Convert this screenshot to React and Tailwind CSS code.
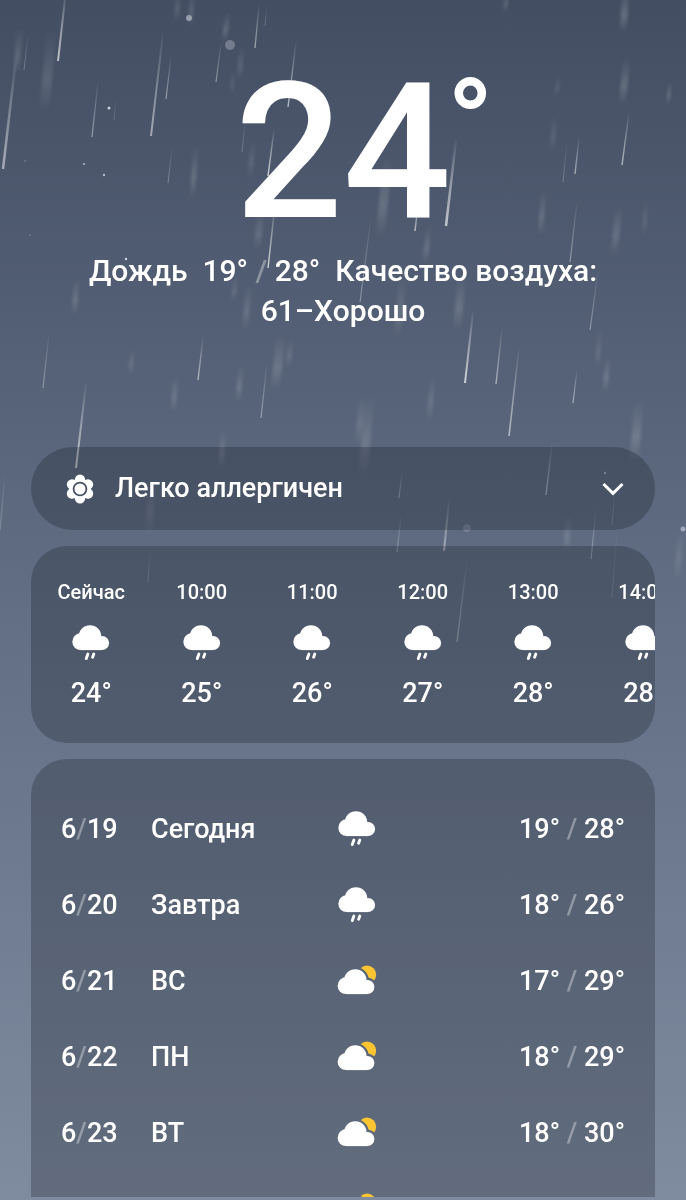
import { useId } from 'react';

const HOURS = [
  { time: 'Сейчас', temp: 24 },
  { time: '10:00', temp: 25 },
  { time: '11:00', temp: 26 },
  { time: '12:00', temp: 27 },
  { time: '13:00', temp: 28 },
  { time: '14:00', temp: 28 },
];

const DAYS = [
  { month: 6, day: 19, label: 'Сегодня', icon: 'rain', low: 19, high: 28 },
  { month: 6, day: 20, label: 'Завтра', icon: 'rain', low: 18, high: 26 },
  { month: 6, day: 21, label: 'ВС', icon: 'sun', low: 17, high: 29 },
  { month: 6, day: 22, label: 'ПН', icon: 'sun', low: 18, high: 29 },
  { month: 6, day: 23, label: 'ВТ', icon: 'sun', low: 18, high: 30 },
  { month: 6, day: 24, label: 'СР', icon: 'sun', low: 18, high: 30 },
];

// [x1, y1, x2, y2, width, opacity]
const DROPS = [
  [66, -10, 58, 61, 2, 0.65], [16, 58, 3, 169, 2.5, 0.5], [28, 34, 24, 70, 1, 0.25],
  [98, 82, 92, 137, 1.2, 0.45], [163, 33, 151, 136, 2, 0.5], [171, 57, 166, 99, 1.2, 0.45],
  [221, 43, 216, 82, 1.2, 0.4], [259, 5, 255, 48, 1.3, 0.5], [267, 5, 265, 26, 1, 0.2],
  [296, 42, 288, 107, 1.4, 0.6], [116, 97, 114, 120, 1, 0.15], [172, 148, 168, 183, 1, 0.3],
  [245, 122, 242, 152, 1, 0.25], [274, 130, 268, 176, 1.5, 0.7], [275, 205, 268, 268, 1.5, 0.7],
  [456, 140, 446, 226, 2.5, 0.65], [418, 205, 415, 231, 1.5, 0.6], [579, 138, 575, 174, 1.4, 0.5],
  [567, 143, 563, 182, 1, 0.25], [629, 113, 622, 165, 1.5, 0.55], [577, 202, 570, 262, 1.2, 0.4],
  [371, 218, 360, 302, 1.2, 0.35], [49, 334, 43, 388, 1.2, 0.35], [203, 338, 198, 380, 1.4, 0.55],
  [86, 384, 76, 468, 2, 0.65], [267, 363, 261, 418, 1.2, 0.4], [473, 312, 465, 383, 2, 0.7],
  [502, 329, 496, 384, 1.4, 0.5], [519, 348, 509, 436, 1.6, 0.55], [577, 370, 573, 403, 1.2, 0.5],
  [598, 272, 590, 330, 1.2, 0.35], [552, 443, 546, 495, 1.4, 0.45], [402, 472, 399, 498, 1.2, 0.35],
  [401, 516, 397, 552, 1.2, 0.3], [449, 500, 444, 551, 2, 0.45], [467, 560, 457, 642, 1.5, 0.35],
  [596, 510, 591, 559, 1.2, 0.35], [617, 530, 612, 598, 1.2, 0.15], [615, 490, 612, 525, 1, 0.2],
  [150, 552, 148, 582, 1, 0.25], [5, 475, 0, 530, 1.5, 0.2],
];

const SOFT_DROPS = [
  [20, 28, 16, 75, 6, 0.14], [52, 30, 44, 112, 10, 0.11], [179, -10, 176, 22, 5, 0.12],
  [193, -10, 190, 27, 5, 0.12], [228, 12, 224, 42, 5, 0.16], [242, 46, 239, 80, 5, 0.12],
  [233, 70, 232, 95, 4, 0.1], [196, 145, 192, 200, 5, 0.16], [253, 140, 250, 178, 5, 0.1],
  [261, 210, 257, 250, 7, 0.12], [388, 155, 380, 238, 9, 0.15], [507, -8, 505, 12, 4, 0.15],
  [626, -10, 623, 32, 7, 0.18], [627, 58, 622, 104, 7, 0.16], [559, 75, 556, 97, 4, 0.1],
  [555, 115, 552, 152, 5, 0.1], [544, 190, 540, 236, 5, 0.15], [619, 205, 614, 255, 7, 0.14],
  [646, 200, 644, 236, 4, 0.1], [670, 82, 668, 104, 3, 0.2], [429, 225, 425, 264, 5, 0.15],
  [403, 276, 397, 338, 7, 0.12], [462, 276, 457, 330, 8, 0.14], [77, 278, 74, 315, 5, 0.15],
  [236, 275, 233, 302, 4, 0.12], [249, 285, 245, 330, 6, 0.13], [281, 335, 275, 390, 9, 0.14],
  [291, 338, 288, 368, 5, 0.12], [133, 348, 130, 375, 4, 0.13], [176, 376, 173, 412, 5, 0.14],
  [241, 365, 238, 402, 5, 0.15], [223, 430, 221, 468, 5, 0.14], [433, 375, 429, 422, 5, 0.12],
  [362, 395, 358, 445, 6, 0.12], [370, 395, 363, 475, 9, 0.13], [600, 330, 597, 368, 4, 0.12],
  [608, 357, 605, 392, 5, 0.16], [639, 402, 634, 462, 9, 0.15], [152, 480, 149, 535, 7, 0.1],
  [569, 515, 566, 552, 6, 0.12], [681, 530, 677, 580, 6, 0.1],
];

// [cx, cy, r, opacity]
const SPLASHES = [
  [189, 18, 3, 0.5], [230, 45, 5, 0.3], [109, 108, 1.5, 0.85], [84, 164, 1, 0.7],
  [104, 175, 1.2, 0.7], [126, 259, 1.2, 0.9], [25, 161, 0.8, 0.4], [30, 235, 0.8, 0.4],
  [683, 529, 2.5, 0.5], [467, 528, 4, 0.2], [605, 473, 1.2, 0.5],
];

const CLOUD_SHAPE = (
  <>
    <circle cx="19" cy="12.5" r="11.3" />
    <circle cx="9.7" cy="17.7" r="8.4" />
    <circle cx="31" cy="19" r="7.1" />
    <rect x="9.7" y="15" width="21.3" height="11.1" />
  </>
);

export default function App() {
  return (
    <div className="relative isolate flex h-screen flex-col overflow-hidden bg-linear-to-b from-[#434e63] via-[#626e84] to-[#7f8b9f] px-[31px] pb-[3px] font-['Roboto','Noto_Sans',sans-serif] font-medium text-white">
      <Rain />

      <header className="flex flex-col items-center pt-[53px] text-center">
        <h1 className="relative text-[190px] leading-[198px]">
          24
          <span className="absolute left-full top-0 -ml-1 text-[120px] font-bold leading-[140px]">°</span>
        </h1>
        <p className="px-12 text-[30px] leading-10">
          Дождь&nbsp; 19° <Slash /> 28°&nbsp; Качество воздуха: 61–Хорошо
        </p>
      </header>

      <main className="mt-[116px] flex min-h-0 flex-1 flex-col gap-4">
        <button
          type="button"
          className="flex h-[83px] shrink-0 items-center rounded-full bg-[#141c28]/28 pl-[34px] pr-[30px] text-left text-[27px]"
        >
          <FlowerIcon />
          <span className="ml-5 flex-1">Легко аллергичен</span>
          <ChevronIcon />
        </button>

        <section className="shrink-0 overflow-hidden rounded-[36px] bg-[#141c28]/28 py-8 pl-[5px]">
          <ul className="grid auto-cols-[17.85%] grid-flow-col">
            {HOURS.map((hour) => (
              <li key={hour.time} className="flex flex-col items-center">
                <span className="text-[20px] leading-7">{hour.time}</span>
                <RainIcon className="mt-[18px]" />
                <span className="mt-[13px] text-[27px] leading-9">{hour.temp}°</span>
              </li>
            ))}
          </ul>
        </section>

        <section className="min-h-0 flex-1 overflow-hidden rounded-t-[36px] bg-[#141c28]/28 px-[30px] pt-8 text-[27px]">
          <ul>
            {DAYS.map((day) => (
              <li key={day.day} className="grid h-[76px] grid-cols-[90px_3fr_40px_4fr] items-center">
                <span>
                  {day.month}
                  <Slash />
                  {day.day}
                </span>
                <span>{day.label}</span>
                {day.icon === 'rain' ? <RainIcon /> : <SunCloudIcon />}
                <span className="text-right">
                  {day.low}° <Slash /> {day.high}°
                </span>
              </li>
            ))}
          </ul>
        </section>
      </main>
    </div>
  );
}

function Slash() {
  return <span className="text-white/35">/</span>;
}

function Rain() {
  return (
    <svg
      className="absolute inset-x-0 top-0 -z-10 w-full"
      viewBox="0 0 686 700"
      fill="none"
      aria-hidden
    >
      <defs>
        <linearGradient id="drop" x1="0" y1="0" x2="0" y2="1">
          <stop offset="0" stopColor="#fff" stopOpacity="0.05" />
          <stop offset="0.5" stopColor="#fff" stopOpacity="0.6" />
          <stop offset="1" stopColor="#fff" />
        </linearGradient>
        <linearGradient id="softDrop" x1="0" y1="0" x2="0" y2="1">
          <stop offset="0" stopColor="#fff" stopOpacity="0" />
          <stop offset="0.6" stopColor="#fff" />
          <stop offset="1" stopColor="#fff" stopOpacity="0" />
        </linearGradient>
        <filter id="haze" x="0" y="-20" width="686" height="740" filterUnits="userSpaceOnUse">
          <feGaussianBlur stdDeviation="1.5" />
        </filter>
      </defs>
      <g filter="url(#haze)">
        {SOFT_DROPS.map(([x1, y1, x2, y2, w, opacity], i) => (
          <line key={i} x1={x1} y1={y1} x2={x2} y2={y2} stroke="url(#softDrop)" strokeWidth={w} opacity={opacity} />
        ))}
      </g>
      {DROPS.map(([x1, y1, x2, y2, w, opacity], i) => (
        <line key={i} x1={x1} y1={y1} x2={x2} y2={y2} stroke="url(#drop)" strokeWidth={w} opacity={opacity} />
      ))}
      {SPLASHES.map(([cx, cy, r, opacity], i) => (
        <circle key={i} cx={cx} cy={cy} r={r} fill="#e2e6ee" opacity={opacity} />
      ))}
    </svg>
  );
}

function RainIcon({ className = '' }) {
  return (
    <svg className={`shrink-0 ${className}`} width="40" height="38" viewBox="0 0 40 38" fill="currentColor" aria-hidden>
      {CLOUD_SHAPE}
      <path
        d="M16.9 30.1 15.3 34.6M22.8 30.1 21.6 33.2"
        stroke="currentColor"
        strokeWidth="2.9"
        strokeLinecap="round"
      />
    </svg>
  );
}

function SunCloudIcon() {
  const maskId = useId();

  return (
    <svg width="40" height="38" viewBox="0 0 40 38" fill="currentColor" aria-hidden>
      <mask id={maskId} maskUnits="userSpaceOnUse" x="0" y="0" width="40" height="38">
        <rect width="40" height="38" fill="#fff" />
        <g transform="translate(-0.7 6)" fill="#000" stroke="#000" strokeWidth="4.6">
          {CLOUD_SHAPE}
        </g>
      </mask>
      <circle cx="30" cy="12.8" r="9.2" fill="#fbc531" mask={`url(#${maskId})`} />
      <g transform="translate(-0.7 6)">{CLOUD_SHAPE}</g>
    </svg>
  );
}

function FlowerIcon() {
  return (
    <svg width="30" height="30" viewBox="-15 -15 30 30" fill="currentColor" aria-hidden>
      {[0, 60, 120, 180, 240, 300].map((angle) => (
        <circle key={angle} cy="-9.2" r="5.2" transform={`rotate(${angle})`} />
      ))}
      <circle r="10.5" />
      <circle r="6.4" stroke="#485266" strokeWidth="1.8" />
    </svg>
  );
}

function ChevronIcon() {
  return (
    <svg
      width="24"
      height="16"
      viewBox="0 0 24 16"
      fill="none"
      stroke="currentColor"
      strokeWidth="3"
      aria-hidden
    >
      <path d="M2.5 3 12 12.3 21.5 3" />
    </svg>
  );
}
